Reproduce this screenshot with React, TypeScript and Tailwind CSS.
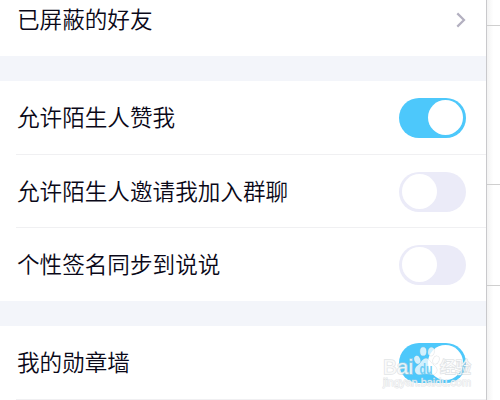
import clsx from 'clsx';
import type { ReactNode } from 'react';

interface ToggleProps {
  on: boolean;
}

function Toggle({ on }: ToggleProps) {
  return (
    <button
      role="switch"
      aria-checked={on}
      className={clsx(
        'flex h-10 w-[67px] shrink-0 items-center rounded-full px-[3px]',
        on ? 'justify-end bg-[#4dc8fb]' : 'justify-start bg-[#ebebf8]'
      )}
    >
      <span className="h-[35px] w-[35px] rounded-full bg-white" />
    </button>
  );
}

interface SettingRowProps {
  label: string;
  children: ReactNode;
}

function SettingRow({ label, children }: SettingRowProps) {
  return (
    <div className="flex h-[73px] items-center justify-between pr-5 pl-[17px]">
      <span className="text-[22.6px] leading-none font-[350] whitespace-nowrap text-[#0a0818]">{label}</span>
      {children}
    </div>
  );
}

function Divider() {
  return <div className="ml-4 h-px bg-[#f0f0f2]" />;
}

function SectionGap() {
  return <div className="h-[25px] bg-[#f3f5fa]" />;
}

function ChevronIcon() {
  return (
    <svg width="10" height="16" viewBox="0 0 10 16" fill="none" stroke="#b3b0c0" strokeWidth="2.2">
      <path d="M1.3 1.4 8 8 1.3 14.6" />
    </svg>
  );
}

function Watermark() {
  return (
    <svg
      className="pointer-events-none absolute top-[340px] left-[378px]"
      width="100"
      height="54"
      viewBox="0 0 100 54"
      fill="#fff"
      stroke="#c8cdd1"
      strokeOpacity="0.55"
      strokeWidth="1.6"
      paintOrder="stroke"
    >
      <g fillOpacity="0.75" strokeWidth="0.9">
        <ellipse cx="39.3" cy="19.8" rx="2.8" ry="4" transform="rotate(-20 39.3 19.8)" />
        <ellipse cx="45.2" cy="11.4" rx="3" ry="4.2" />
        <ellipse cx="53.2" cy="11.6" rx="3" ry="4.2" transform="rotate(10 53.2 11.6)" />
        <ellipse cx="58" cy="20" rx="2.9" ry="4" transform="rotate(25 58 20)" />
        <path d="M48 18.5c-3.6 0-4.8 4.6-8.2 6.9-4.5 3.2-3 9 1.3 9 2.7 0 4.4-.7 6.9-.7s4.2.7 6.9.7c4.3 0 5.8-5.8 1.3-9-3.4-2.3-4.6-6.9-8.2-6.9z" />
      </g>
      <text
        x="5"
        y="33.5"
        textLength="30"
        lengthAdjust="spacingAndGlyphs"
        fillOpacity="0.8"
        className="font-['Liberation_Sans',sans-serif] text-[21px]"
      >
        Bai
      </text>
      <text
        x="41.5"
        y="33.5"
        textLength="13"
        lengthAdjust="spacingAndGlyphs"
        fill="#5cc6f2"
        fillOpacity="0.85"
        stroke="none"
        className="font-['Liberation_Sans',sans-serif] text-[14px] font-bold"
      >
        du
      </text>
      <text
        x="62"
        y="33"
        textLength="31"
        fillOpacity="0.85"
        className="font-['Noto_Sans_CJK_SC',sans-serif] text-[15.5px]"
      >
        经验
      </text>
      <text
        x="5"
        y="45.5"
        textLength="88"
        lengthAdjust="spacingAndGlyphs"
        fillOpacity="0.75"
        strokeWidth="1"
        className="font-['Liberation_Sans',sans-serif] text-[11px]"
      >
        jingyan.baidu.com
      </text>
    </svg>
  );
}

export default function App() {
  return (
    <div className="relative flex h-[400px] w-[500px] overflow-hidden bg-white font-['Noto_Sans_CJK_SC',sans-serif]">
      <div className="flex w-[486px] shrink-0 flex-col">
        <div className="-mt-[17px] shrink-0">
          <SettingRow label="已屏蔽的好友">
            <ChevronIcon />
          </SettingRow>
        </div>
        <SectionGap />
        <SettingRow label="允许陌生人赞我">
          <Toggle on />
        </SettingRow>
        <Divider />
        <div className="-mb-px">
          <SettingRow label="允许陌生人邀请我加入群聊">
            <Toggle on={false} />
          </SettingRow>
        </div>
        <Divider />
        <SettingRow label="个性签名同步到说说">
          <Toggle on={false} />
        </SettingRow>
        <SectionGap />
        <SettingRow label="我的勋章墙">
          <Toggle on />
        </SettingRow>
        <Divider />
      </div>

      {/* edge of the page behind the panel */}
      <div className="flex flex-1 flex-col border-l border-[#c9c9cc] bg-linear-to-r from-[#f3f3f3] to-white to-50%">
        <div className="h-[26px] border-b border-[#cfcfcf]" />
        <div className="h-[159px] border-b border-[#cfcfcf]" />
        <div className="h-[101px] border-b border-[#cfcfcf]" />
      </div>

      <Watermark />
    </div>
  );
}
